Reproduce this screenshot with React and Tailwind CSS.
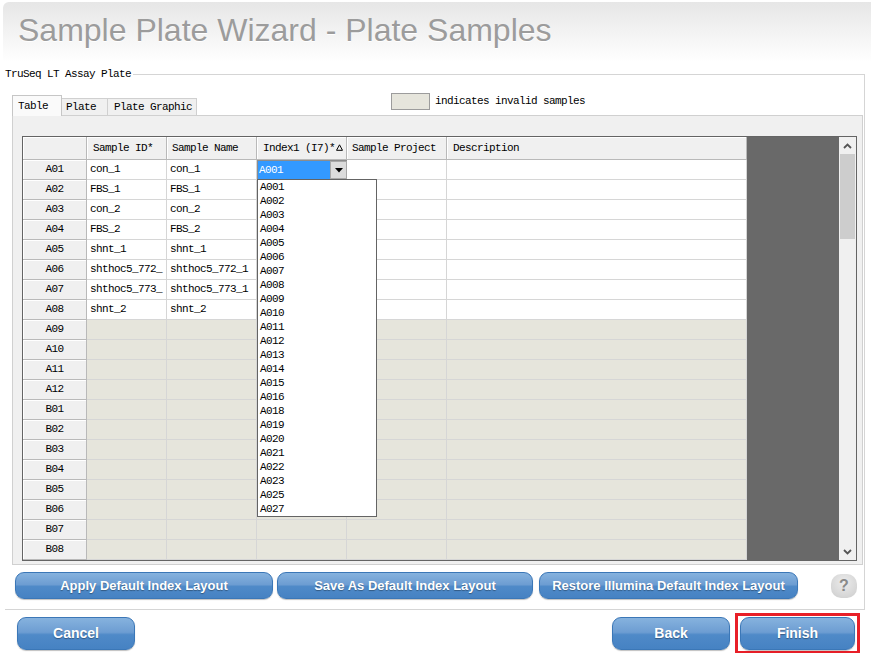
import React from 'react';

const mono = "[font-family:'Liberation_Mono','DejaVu_Sans_Mono',monospace] text-[11px] tracking-[-0.6px]";
const sans = "[font-family:'Liberation_Sans',Arial,sans-serif]";

const widths = ['w-[64px]', 'w-[80px]', 'w-[90px]', 'w-[90px]', 'w-[100px]', 'w-[300px]'];

const validRows = [
  ['A01', 'con_1', 'con_1'],
  ['A02', 'FBS_1', 'FBS_1'],
  ['A03', 'con_2', 'con_2'],
  ['A04', 'FBS_2', 'FBS_2'],
  ['A05', 'shnt_1', 'shnt_1'],
  ['A06', 'shthoc5_772_', 'shthoc5_772_1'],
  ['A07', 'shthoc5_773_', 'shthoc5_773_1'],
  ['A08', 'shnt_2', 'shnt_2'],
];
const invalidRows = ['A09', 'A10', 'A11', 'A12', 'B01', 'B02', 'B03', 'B04', 'B05', 'B06', 'B07', 'B08'];

const indexOptions = [
  'A001', 'A002', 'A003', 'A004', 'A005', 'A006', 'A007', 'A008', 'A009', 'A010', 'A011', 'A012',
  'A013', 'A014', 'A015', 'A016', 'A018', 'A019', 'A020', 'A021', 'A022', 'A023', 'A025', 'A027',
];

const headCell = 'bg-[#f0f0f0] border-r border-b border-[#b9b9b9] shadow-[inset_1px_1px_0_#ffffff] flex items-center shrink-0';
const dataCell = 'border-r border-b border-[#d6d6d6] flex items-center pl-[3px] shrink-0 whitespace-nowrap overflow-hidden';

function BlueButton({ children, className }) {
  return (
    <div
      className={`flex items-center justify-center shrink-0 rounded-[9px] border border-[#3b77b7] bg-[linear-gradient(180deg,#86b2de_0%,#6d9dd2_46%,#4f8ac8_54%,#4682c3_100%)] text-white font-bold ${sans} [text-shadow:0_1px_1px_rgba(0,0,0,0.35)] shadow-[0_1px_1px_rgba(0,0,0,0.25)] ${className}`}
    >
      {children}
    </div>
  );
}

function Triangle() {
  return (
    <svg width="7" height="7" viewBox="0 0 7 7" className="inline-block ml-[1px] -mt-[2px]">
      <path d="M3.5 0.8 L6.5 6.3 L0.5 6.3 Z" fill="none" stroke="#000" strokeWidth="1" />
    </svg>
  );
}

export default function App() {
  return (
    <div className="w-[871px] h-[653px] bg-white overflow-hidden text-black">
      {/* Title */}
      <div className="ml-[3px] mt-[2px] h-[60px] rounded-tl-[6px] bg-[linear-gradient(180deg,#e6e6e6_0%,#f4f4f4_55%,#ffffff_100%)] pl-[15px] pt-[10px]">
        <div className={`${sans} text-[32px] leading-[37px] text-[#9c9c9c] [text-shadow:0_1px_0_#ffffff]`}>
          Sample Plate Wizard - Plate Samples
        </div>
      </div>

      {/* Group box */}
      <div className="ml-[5px] mr-[6px] mt-[5px]">
        <div className="flex items-center h-[14px]">
          <span className={`${mono} leading-[14px]`}>TruSeq LT Assay Plate</span>
          <div className="flex-1 border-t border-[#d5d5d5] ml-[2px] mt-[1px]" />
        </div>
        <div className="-mt-[6px] border-r border-b border-[#d5d5d5] pt-[20px] pb-[10px]">
          {/* tabs + legend */}
          <div className="flex h-[20px] items-end pl-[7px]">
            <div className={`relative z-10 -mb-px h-[21px] w-[50px] bg-[#fafafa] border-t border-l border-r border-[#c6c6c6] flex items-center pl-[5px] ${mono}`}>
              Table
            </div>
            <div className={`h-[17px] w-[46px] bg-[#f0f0f0] border-t border-r border-[#d0d0d0] flex items-center pl-[4px] ${mono}`}>
              Plate
            </div>
            <div className={`h-[17px] w-[89px] bg-[#f0f0f0] border-t border-r border-[#d0d0d0] flex items-center pl-[6px] ${mono}`}>
              Plate Graphic
            </div>
            <div className="self-start -mt-[2px] ml-[194px] flex items-center">
              <div className="w-[39px] h-[17px] bg-[#e6e5dc] border border-[#9c9c9c]" />
              <span className={`${mono} ml-[5px]`}>indicates invalid samples</span>
            </div>
          </div>

          {/* tab pane */}
          <div className="ml-[7px] mr-[1px] h-[450px] bg-[#f0f0f0] border border-[#d0d0d0] pl-[9px] pr-[5px] pt-[20px]">
            <div className="relative flex h-[425px] border border-[#646464] bg-[#696969]">
              <div className={`flex-1 flex flex-col ${mono}`}>
                {/* header row */}
                <div className="flex h-[23px] shrink-0">
                  <div className={`${headCell} ${widths[0]}`} />
                  <div className={`${headCell} ${widths[1]} pl-[6px]`}>Sample ID*</div>
                  <div className={`${headCell} ${widths[2]} pl-[5px]`}>Sample Name</div>
                  <div className={`${headCell} ${widths[3]} pl-[6px]`}>
                    Index1 (I7)*<Triangle />
                  </div>
                  <div className={`${headCell} ${widths[4]} pl-[5px]`}>Sample Project</div>
                  <div className={`${headCell} ${widths[5]} pl-[6px]`}>Description</div>
                </div>

                {validRows.map((r, i) => (
                  <div key={r[0]} className="flex h-[20px] shrink-0">
                    <div className={`${headCell} ${widths[0]} justify-center`}>{r[0]}</div>
                    <div className={`${dataCell} ${widths[1]} bg-white`}>{r[1]}</div>
                    <div className={`${dataCell} ${widths[2]} bg-white`}>{r[2]}</div>
                    {i === 0 ? (
                      <div className={`${widths[3]} shrink-0 flex border-b border-[#d6d6d6] bg-white`}>
                        <div className="flex-1 flex border-t border-l border-[#8c8c8c]">
                          <div className="flex-1 bg-[#3399ff] text-white flex items-center pl-[1px]">A001</div>
                          <div className="w-[17px] bg-[#dcdcdc] border border-[#a8a8a8] flex items-center justify-center">
                            <svg width="8" height="5" viewBox="0 0 8 5">
                              <path d="M0 0 L8 0 L4 4.5 Z" fill="#000" />
                            </svg>
                          </div>
                        </div>
                      </div>
                    ) : (
                      <div className={`${dataCell} ${widths[3]} bg-white`} />
                    )}
                    <div className={`${dataCell} ${widths[4]} bg-white`} />
                    <div className={`${dataCell} ${widths[5]} bg-white`} />
                  </div>
                ))}

                {invalidRows.map((id) => (
                  <div key={id} className="flex h-[20px] shrink-0">
                    <div className={`${headCell} ${widths[0]} justify-center`}>{id}</div>
                    <div className={`${dataCell} ${widths[1]} bg-[#e6e5dc]`} />
                    <div className={`${dataCell} ${widths[2]} bg-[#e6e5dc]`} />
                    <div className={`${dataCell} ${widths[3]} bg-[#e6e5dc]`} />
                    <div className={`${dataCell} ${widths[4]} bg-[#e6e5dc]`} />
                    <div className={`${dataCell} ${widths[5]} bg-[#e6e5dc]`} />
                  </div>
                ))}
              </div>

              {/* scrollbar */}
              <div className="w-[17px] shrink-0 flex flex-col bg-[#f0f0f0]">
                <div className="h-[17px] flex items-center justify-center">
                  <svg width="9" height="6" viewBox="0 0 9 6">
                    <path d="M1 5 L4.5 1.5 L8 5" fill="none" stroke="#555" strokeWidth="1.8" />
                  </svg>
                </div>
                <div className="h-[85px] mx-[1px] bg-[#cdcdcd]" />
                <div className="flex-1" />
                <div className="h-[17px] flex items-center justify-center">
                  <svg width="9" height="6" viewBox="0 0 9 6">
                    <path d="M1 1 L4.5 4.5 L8 1" fill="none" stroke="#555" strokeWidth="1.8" />
                  </svg>
                </div>
              </div>

              {/* open combobox list */}
              <div className={`absolute left-[234px] top-[42px] w-[120px] h-[338px] bg-white border border-[#646464] z-20 ${mono}`}>
                {indexOptions.map((o) => (
                  <div key={o} className="h-[14px] leading-[14px] pl-[2px]">{o}</div>
                ))}
              </div>
            </div>
          </div>

          {/* layout buttons */}
          <div className="flex items-center mt-[7px] pl-[10px]">
            <BlueButton className="w-[258px] h-[27px] text-[13px]">Apply Default Index Layout</BlueButton>
            <BlueButton className="w-[256px] h-[27px] text-[13px] ml-[4px]">Save As Default Index Layout</BlueButton>
            <BlueButton className="w-[259px] h-[27px] text-[13px] ml-[6px]">Restore Illumina Default Index Layout</BlueButton>
            <div className={`ml-[33px] w-[26px] h-[24px] rounded-[10px] bg-[radial-gradient(circle_at_50%_35%,#ececec_0%,#d6d6d6_70%,#cacaca_100%)] flex items-center justify-center text-[#8a8a8a] font-bold text-[16px] ${sans}`}>
              ?
            </div>
          </div>
        </div>
      </div>

      {/* bottom navigation */}
      <div className="flex items-center pl-[17px] pr-[11px] mt-[3px]">
        <BlueButton className="w-[118px] h-[33px] text-[14px]">Cancel</BlueButton>
        <BlueButton className="w-[118px] h-[33px] text-[14px] ml-auto">Back</BlueButton>
        <div className="ml-[5px] w-[125px] h-[41px] border-[3px] border-[#e81f28] p-[2px] flex items-center">
          <BlueButton className="w-full h-[33px] text-[14px]">Finish</BlueButton>
        </div>
      </div>
    </div>
  );
}
